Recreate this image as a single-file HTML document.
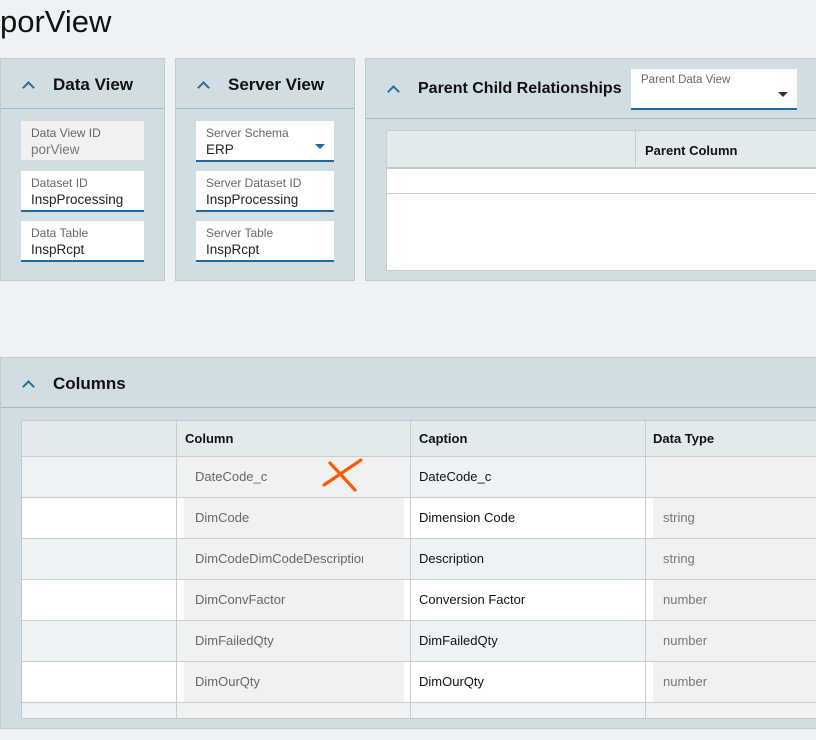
<!DOCTYPE html>
<html><head><meta charset="utf-8"><style>
*{box-sizing:border-box;margin:0;padding:0}
body{width:816px;height:740px;overflow:hidden;background:#eef2f5;font-family:"Liberation Sans",sans-serif;position:relative;color:#111}
.abs{position:absolute}
.panel{position:absolute;background:#d0dde3;border:1px solid #c4c9cc}
.hdr{position:absolute;left:0;right:0;top:0;border-bottom:1px solid #8fc0cf}
.chev{position:absolute;width:9px;height:9px;border-left:2px solid #2a6f97;border-top:2px solid #2a6f97;transform:rotate(45deg)}
.ttl{position:absolute;font-size:17px;font-weight:bold;color:#111}
.fld{position:absolute;background:#fff;border-bottom:2px solid #1f6a9c;height:41px}
.fld.ro{background:#f1f1f1;border-bottom:1px solid #d8d8d8}
.fld .l{position:absolute;left:10px;top:5px;font-size:12px;color:#666}
.fld .v{position:absolute;left:10px;top:21px;font-size:13.5px;color:#222}
.fld.ro .v{color:#777}
.tri{position:absolute;width:0;height:0;border-left:5px solid transparent;border-right:5px solid transparent;border-top:5px solid}
.cell{position:absolute;font-size:13px}
</style></head><body>
<div class="abs" style="left:0;top:4px;font-size:31px;color:#111">porView</div>

<div class="panel" style="left:0;top:58px;width:165px;height:223px">
 <div class="hdr" style="height:50px"></div>
 <div class="chev" style="left:23px;top:24px"></div>
 <div class="ttl" style="left:52px;top:16px">Data View</div>
 <div class="fld ro" style="left:20px;top:62px;width:123px;height:40px"><div class="l">Data View ID</div><div class="v">porView</div></div>
 <div class="fld" style="left:20px;top:112px;width:123px"><div class="l">Dataset ID</div><div class="v">InspProcessing</div></div>
 <div class="fld" style="left:20px;top:162px;width:123px"><div class="l">Data Table</div><div class="v">InspRcpt</div></div>
</div>

<div class="panel" style="left:175px;top:58px;width:180px;height:223px">
 <div class="hdr" style="height:50px"></div>
 <div class="chev" style="left:23px;top:24px"></div>
 <div class="ttl" style="left:52px;top:16px">Server View</div>
 <div class="fld" style="left:20px;top:62px;width:138px"><div class="l">Server Schema</div><div class="v">ERP</div><div class="tri" style="right:9px;top:23px;border-top-color:#1f6a9c"></div></div>
 <div class="fld" style="left:20px;top:112px;width:138px"><div class="l">Server Dataset ID</div><div class="v">InspProcessing</div></div>
 <div class="fld" style="left:20px;top:162px;width:138px"><div class="l">Server Table</div><div class="v">InspRcpt</div></div>
</div>

<div class="panel" style="left:365px;top:58px;width:460px;height:223px">
 <div class="hdr" style="height:60px"></div>
 <div class="chev" style="left:23px;top:28px"></div>
 <div class="ttl" style="left:52px;top:21px;font-size:16px">Parent Child Relationships</div>
 <div class="fld" style="left:265px;top:10px;width:166px;height:41px"><div class="l" style="font-size:11.5px">Parent Data View</div><div class="tri" style="right:9px;top:23px;border-top-color:#333"></div></div>
 <div class="abs" style="left:20px;top:71px;width:440px;height:141px;background:#fff;border:1px solid #ccc">
  <div class="abs" style="left:0;top:0;right:0;height:38px;background:#e3eaed;border-bottom:2px solid #c8c8c8"></div>
  <div class="abs" style="left:248px;top:0;width:1px;height:38px;background:#ccc"></div>
  <div class="cell" style="left:258px;top:12px;font-weight:bold">Parent Column</div>
  <div class="abs" style="left:0;top:62px;right:0;height:1px;background:#ccc"></div>
 </div>
</div>

<div class="panel" style="left:0;top:357px;width:830px;height:372px">
 <div class="hdr" style="height:50px"></div>
 <div class="chev" style="left:23px;top:24px"></div>
 <div class="ttl" style="left:52px;top:16px">Columns</div>
 <div class="abs" style="left:20px;top:62px;width:810px;height:299px;background:#fff;border:1px solid #c8c8c8;overflow:hidden">
  <div class="abs" style="left:0;top:0;right:0;height:35px;background:#e3eaed"></div>
  <div class="cell" style="left:163px;top:10px;font-weight:bold">Column</div>
  <div class="cell" style="left:397px;top:10px;font-weight:bold">Caption</div>
  <div class="cell" style="left:631px;top:10px;font-weight:bold">Data Type</div>
  <div class="abs" style="left:0;top:35px;right:0;height:41px;background:#edf3f5"></div>
  <div class="abs" style="left:0;top:76px;right:0;height:41px;background:#fff"></div>
  <div class="abs" style="left:0;top:117px;right:0;height:41px;background:#edf3f5"></div>
  <div class="abs" style="left:0;top:158px;right:0;height:41px;background:#fff"></div>
  <div class="abs" style="left:0;top:199px;right:0;height:41px;background:#edf3f5"></div>
  <div class="abs" style="left:0;top:240px;right:0;height:41px;background:#fff"></div>
  <div class="abs" style="left:0;top:281px;right:0;height:20px;background:#edf3f5"></div>
  <div class="abs" style="left:162px;top:35px;width:220px;height:264px;background:#f1f1f1"></div>
  <div class="abs" style="left:631px;top:35px;width:200px;height:264px;background:#f1f1f1"></div>
  <div class="abs" style="left:389px;top:76px;width:235px;height:41px;background:#fff"></div>
  <div class="abs" style="left:389px;top:158px;width:235px;height:41px;background:#fff"></div>
  <div class="abs" style="left:389px;top:240px;width:235px;height:41px;background:#fff"></div>
  <div class="abs" style="left:0;top:35px;width:810px;height:1px;background:#ccc"></div>
  <div class="abs" style="left:0;top:76px;width:810px;height:1px;background:#ccc"></div>
  <div class="abs" style="left:0;top:117px;width:810px;height:1px;background:#ccc"></div>
  <div class="abs" style="left:0;top:158px;width:810px;height:1px;background:#ccc"></div>
  <div class="abs" style="left:0;top:199px;width:810px;height:1px;background:#ccc"></div>
  <div class="abs" style="left:0;top:240px;width:810px;height:1px;background:#ccc"></div>
  <div class="abs" style="left:0;top:281px;width:810px;height:1px;background:#ccc"></div>
  <div class="abs" style="left:154px;top:0;width:1px;height:299px;background:#ccc"></div>
  <div class="abs" style="left:388px;top:0;width:1px;height:299px;background:#ccc"></div>
  <div class="abs" style="left:623px;top:0;width:1px;height:299px;background:#ccc"></div>
  <div class="cell" style="left:173px;top:48px;color:#666">DateCode_c</div>
  <div class="cell" style="left:173px;top:89px;color:#666">DimCode</div>
  <div class="cell" style="left:173px;top:130px;color:#666;width:168px;overflow:hidden;white-space:nowrap">DimCodeDimCodeDescription</div>
  <div class="cell" style="left:173px;top:171px;color:#666">DimConvFactor</div>
  <div class="cell" style="left:173px;top:212px;color:#666">DimFailedQty</div>
  <div class="cell" style="left:173px;top:253px;color:#666">DimOurQty</div>
  <div class="cell" style="left:397px;top:48px">DateCode_c</div>
  <div class="cell" style="left:397px;top:89px">Dimension Code</div>
  <div class="cell" style="left:397px;top:130px">Description</div>
  <div class="cell" style="left:397px;top:171px">Conversion Factor</div>
  <div class="cell" style="left:397px;top:212px">DimFailedQty</div>
  <div class="cell" style="left:397px;top:253px">DimOurQty</div>
  <div class="cell" style="left:641px;top:89px;color:#777">string</div>
  <div class="cell" style="left:641px;top:130px;color:#777">string</div>
  <div class="cell" style="left:641px;top:171px;color:#777">number</div>
  <div class="cell" style="left:641px;top:212px;color:#777">number</div>
  <div class="cell" style="left:641px;top:253px;color:#777">number</div>
 </div>
</div>
<svg class="abs" style="left:0;top:0" width="816" height="740"><path d="M330 463 L355 490 M324 485 L361 460" stroke="#ff5a00" stroke-width="3.2" fill="none" stroke-linecap="round"/></svg>
</body></html>
